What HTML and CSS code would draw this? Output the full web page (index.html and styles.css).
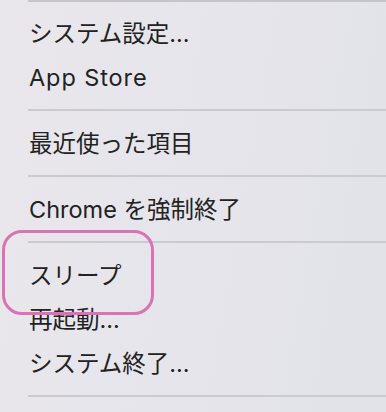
FILE: index.html
```html
<!DOCTYPE html>
<html lang="ja">
<head>
    <meta charset="UTF-8">
    <meta name="viewport" content="width=device-width, initial-scale=1.0">
    <title>Apple Menu</title>
    <link rel="stylesheet" href="styles.css">
</head>
<body>
    <div class="menu">
        <div class="separator first"></div>
        <div class="item">システム設定...</div>
        <div class="item wide">App Store</div>
        <div class="separator"></div>
        <div class="item">最近使った項目</div>
        <div class="separator"></div>
        <div class="item">Chrome を強制終了</div>
        <div class="separator"></div>
        <div class="item">スリープ</div>
        <div class="item">再起動...</div>
        <div class="item">システム終了...</div>
        <div class="separator"></div>

        <div class="highlight"></div>
    </div>
</body>
</html>
```

FILE: styles.css
```css
body {
    margin: 0;
    font-family: "Inter", "Noto Sans CJK JP", sans-serif;
    overflow: hidden;
}
.menu {
    position: relative;
    width: 386px;
    height: 412px;
    background: linear-gradient(100deg, #e9e7ec 0%, #e6e5eb 50%, #e1e3e9 100%);
    color: #222;
}
.separator {
    height: 2px;
    margin: 9px 0 11px 28px;
    background-color: #cbcacf;
}
.separator.first {
    margin-top: 0;
    margin-bottom: 10px;
    background-color: #c4c4ca;
}
.item {
    height: 44px;
    line-height: 44px;
    padding-left: 29px;
    font-size: 23.5px;
    white-space: nowrap;
}
.item.wide {
    letter-spacing: 0.9px;
}
.highlight {
    position: absolute;
    left: 2px;
    top: 230px;
    width: 146px;
    height: 79px;
    border: 3.5px solid #d973b5;
    border-radius: 20px;
}
```
